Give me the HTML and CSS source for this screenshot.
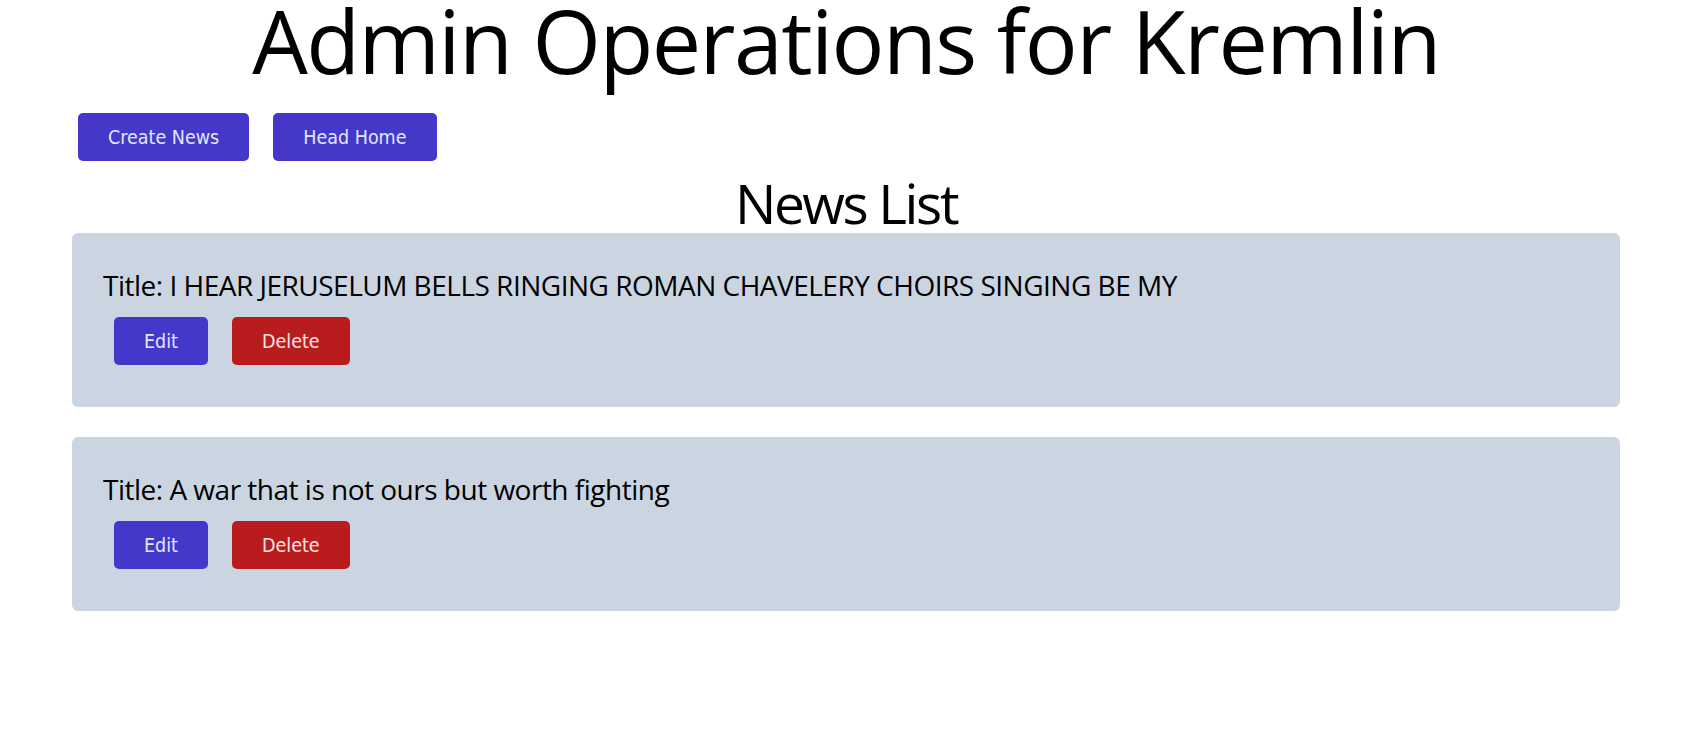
FILE: index.html
```html
<!DOCTYPE html>
<html lang="en">
<head>
<meta charset="utf-8">
<title>Admin Operations for Kremlin</title>
<link rel="stylesheet" href="styles.css">
</head>
<body>
<main class="page">
  <h1 class="page-title">Admin Operations for Kremlin</h1>
  <div class="actions">
    <button class="btn btn-indigo">Create News</button>
    <button class="btn btn-indigo">Head Home</button>
  </div>
  <h2 class="section-title">News List</h2>
  <ul class="news-list">
    <li class="card">
      <p class="card-title">Title: I HEAR JERUSELUM BELLS RINGING ROMAN CHAVELERY CHOIRS SINGING BE MY</p>
      <div class="card-actions">
        <button class="btn btn-indigo">Edit</button>
        <button class="btn btn-red">Delete</button>
      </div>
    </li>
    <li class="card">
      <p class="card-title">Title: A war that is not ours but worth fighting</p>
      <div class="card-actions">
        <button class="btn btn-indigo">Edit</button>
        <button class="btn btn-red">Delete</button>
      </div>
    </li>
  </ul>
</main>
</body>
</html>
```
FILE: styles.css
```css
html, body {
  margin: 0;
  padding: 0;
  background: #ffffff;
  color: #000000;
  font-family: "Open Sans", "Noto Sans", sans-serif;
}

.page {
  padding: 0 62px 0 72px;
}

.page-title {
  margin: 0;
  font-size: 88px;
  font-weight: 400;
  line-height: 80px;
  letter-spacing: -1.6px;
  text-align: center;
}

.actions {
  display: flex;
  gap: 24px;
  margin: 33px 0 0 6px;
}

.btn {
  height: 48px;
  padding: 0 30px;
  border: none;
  border-radius: 5px;
  font-family: "DejaVu Sans Condensed", "DejaVu Sans", sans-serif;
  font-size: 19.5px;
  cursor: pointer;
}

.btn-indigo {
  background: #4338ca;
  color: #e0e7ff;
}

.btn-red {
  background: #b91c1c;
  color: #fee2e2;
}

.section-title {
  margin: 12px 0 0 0;
  font-size: 55px;
  font-weight: 400;
  line-height: 60px;
  letter-spacing: -2.4px;
  text-align: center;
}

.news-list {
  list-style: none;
  margin: 0;
  padding: 0;
  display: flex;
  flex-direction: column;
  gap: 30px;
}

.card {
  background: #cbd5e1;
  border-radius: 6px;
  padding: 32px 31px 42px 31px;
}

.card-title {
  margin: 0 0 12px 0;
  font-size: 28px;
  line-height: 40px;
  letter-spacing: -0.5px;
}

.card-actions {
  display: flex;
  gap: 24px;
  margin-left: 11px;
}
```
